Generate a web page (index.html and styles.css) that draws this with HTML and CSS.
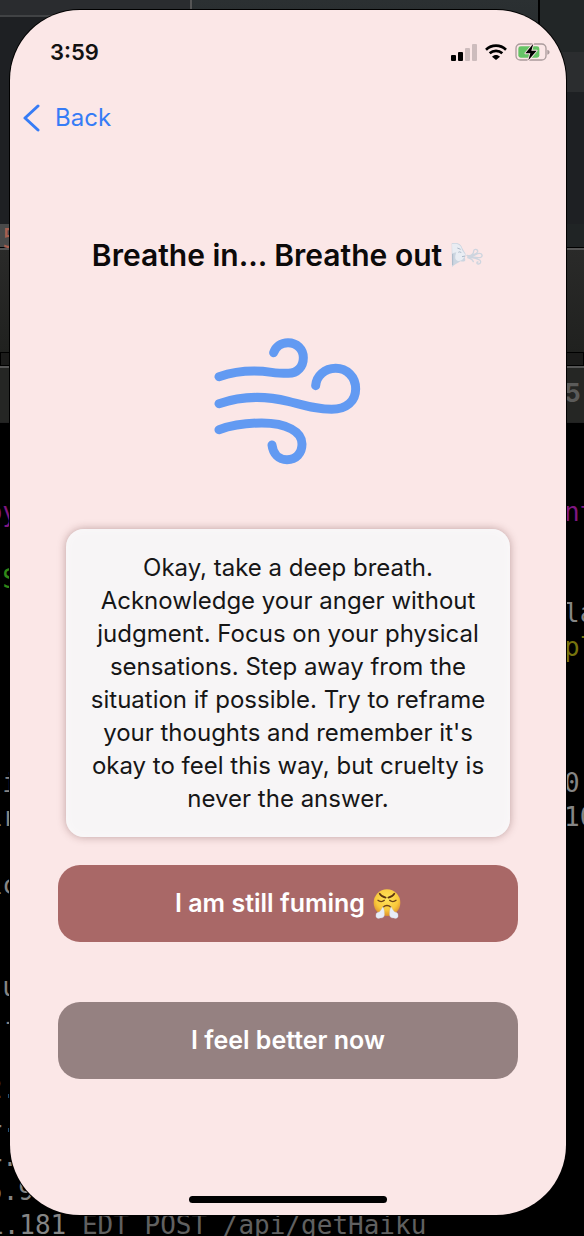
FILE: index.html
```html
<!DOCTYPE html>
<html lang="en">
<head>
<meta charset="utf-8">
<meta name="viewport" content="width=device-width, initial-scale=1">
<title>Breathe</title>
<link rel="stylesheet" href="styles.css">
</head>
<body>
<div class="desktop">
  <div class="backdrop" aria-hidden="true">
    <div class="pane pane-top"></div>
    <div class="pane pane-corner"></div>
    <div class="pane pane-strip"></div>
    <div class="pane pane-tab"></div>
    <div class="pane pane-toolbar"></div>
    <div class="pane pane-gap"></div>
    <div class="pane pane-title"></div>
    <div class="pane pane-terminal"></div>
    <span class="code code-left orange row-tab">5</span>
    <span class="code code-left purple row-1">py</span>
    <span class="code code-left green row-2">S</span>
    <span class="code code-left row-5">:i</span>
    <span class="code code-left row-6">ir</span>
    <span class="code code-left row-7">ic</span>
    <span class="code code-left row-8">u</span>
    <span class="code code-left row-9">--</span>
    <span class="code code-left row-10">2.</span>
    <span class="code code-left row-11">4.</span>
    <span class="code code-left row-12">4.</span>
    <span class="code code-edge row-13">5.9</span>
    <span class="code code-right title-digit row-title">5</span>
    <span class="code code-right purple row-1">nt</span>
    <span class="code code-right row-3">la</span>
    <span class="code code-right olive row-4">pl</span>
    <span class="code code-far row-paren">(</span>
    <span class="code code-right row-5">0.</span>
    <span class="code code-right row-6">10</span>
    <span class="code code-last row-14">1.181 <span class="dim">EDT POST /api/getHaiku</span></span>
  </div>

  <main class="phone">
    <header class="status">
      <span class="time">3:59</span>
      <span class="indicators">
        <svg class="signal" viewBox="0 0 26 17" role="img" aria-label="Signal">
          <rect x="0" y="11" width="5" height="6" rx="1"/>
          <rect x="7" y="8" width="5" height="9" rx="1"/>
          <rect class="faint" x="14" y="4" width="5" height="13" rx="1"/>
          <rect class="faint" x="21" y="0" width="5" height="17" rx="1"/>
        </svg>
        <svg class="wifi" viewBox="0 0 66 48" role="img" aria-label="Wi-Fi">
          <path class="arc" d="M3 17C20 1 46 1 63 17M14 28C25 18 41 18 52 28"/>
          <path d="M21 38C28 31 38 31 45 38L33 48Z"/>
        </svg>
        <svg class="battery" viewBox="0 0 103 54" role="img" aria-label="Battery charging">
          <rect class="shell" x="2" y="3" width="90" height="48" rx="13"/>
          <path class="shell-tip" d="M96 20C105 22 105 33 96 35Z"/>
          <rect class="charge" x="9" y="10" width="63" height="34" rx="7"/>
          <path class="bolt" d="M54 2L30 31H45L39 52L64 23H48Z"/>
        </svg>
      </span>
    </header>

    <nav class="nav">
      <a class="back" href="#">
        <svg class="chevron" viewBox="0 0 18 28" aria-hidden="true"><path d="M16 2L3 14L16 26"/></svg>
        <span>Back</span>
      </a>
    </nav>

    <section class="content">
      <h1 class="heading">
        <span>Breathe in... Breathe out</span>
        <svg class="face" viewBox="0 0 99 78" role="img" aria-label="Wind face">
          <path class="face-back" d="M2 4C18 0 31 5 34 19L44 36L41 45L43 54C42 60 36 59 28 58C22 64 10 67 3 75Z"/>
          <path class="face-front" d="M3 6C20 2 31 9 33 24L43 38C39 51 30 59 19 56C9 51 13 40 16 31L4 34Z"/>
          <path class="face-lines" d="M19 18L29 22M22 31C26 28 29 30 31 33M33 44L43 42M5 36V69"/>
          <path class="puff" d="M48 40C62 45 68 33 68 28C68 20 81 20 80 29C78 37 70 36 61 41C75 43 74 34 85 34C94 34 96 43 89 46C79 50 64 43 49 44C62 47 73 49 82 52C93 55 90 67 81 66C76 65 77 60 81 60M50 47C61 50 65 53 67 59"/>
        </svg>
      </h1>

      <svg class="wind" viewBox="-6 0 540 450" role="img" aria-label="Wind">
        <path d="M57 155C120 134 180 137 215 142C235 145 250 145 265 145C292 145 310 125 310 98C310 72 290 53 264 53C243 53 227 65 221 83"/>
        <path d="M57 236C130 211 200 213 265 229C320 243 350 253 395 253C440 253 467 228 467 192C467 155 440 130 407 130C374 130 349 153 347 182"/>
        <path d="M57 314C100 299 145 294 185 294C260 294 306 320 306 357C306 385 288 404 261 404C236 404 219 386 216 360"/>
      </svg>

      <p class="advice">Okay, take a deep breath. Acknowledge your anger without judgment. Focus on your physical sensations. Step away from the situation if possible. Try to reframe your thoughts and remember it's okay to feel this way, but cruelty is never the answer.</p>

      <div class="actions">
        <button class="action action-fuming" type="button">
          <span>I am still fuming</span>
          <svg class="steam" viewBox="0 0 84 90" role="img" aria-label="Face with steam from nose">
            <defs>
              <radialGradient id="skin" cx="50%" cy="35%" r="65%">
                <stop offset="0" stop-color="#ffe45c"/>
                <stop offset="0.65" stop-color="#f9c93c"/>
                <stop offset="1" stop-color="#dd8f2b"/>
              </radialGradient>
            </defs>
            <circle cx="42" cy="41" r="40" fill="url(#skin)"/>
            <path class="brow" d="M20 14C24 22 30 24 38 26M64 14C60 22 54 24 46 26"/>
            <path class="lid" d="M15 34C20 39 29 39 34 34M50 34C55 39 64 39 69 34M31 54C37 48 47 48 53 54"/>
            <path class="vapor" d="M30 53C33 60 34 65 34 73C36 83 29 88 22 87C15 91 7 86 9 79C8 72 14 69 19 69C23 65 26 59 30 53Z"/>
            <path class="vapor" d="M54 53C51 60 50 65 50 73C48 83 55 88 62 87C69 91 77 86 75 79C76 72 70 69 65 69C61 65 58 59 54 53Z"/>
          </svg>
        </button>
        <button class="action action-better" type="button">I feel better now</button>
      </div>
    </section>

    <div class="home-bar"></div>
  </main>
</div>
</body>
</html>
```

FILE: styles.css
```css
* { box-sizing: border-box; }

body {
  margin: 0;
  background: #000;
  font-family: Inter, "Liberation Sans", sans-serif;
}

.desktop {
  position: relative;
  min-height: 100vh;
  padding: 10px 18px 21px 10px;
  overflow: hidden;
}

/* Windows lying behind the phone */
.backdrop { position: absolute; inset: 0; overflow: hidden; background: #1e2023; }
.pane { position: absolute; left: 0; right: 0; }
.pane-top { top: 0; height: 17px; right: 394px; background: #2a2c2f; border-bottom: 2px solid #414345; }
.pane-corner { top: 0; height: 92px; left: 190px; background: linear-gradient(#2b3032, #222627); border-left: 2px solid #555; }
.pane-strip { top: 0; height: 92px; left: 538px; background: linear-gradient(#222627 52px, #2b2d2f 52px); border-left: 2px solid #000; }
.pane-tab { top: 224px; height: 24px; background: linear-gradient(90deg, #4a4a4a 50%, #202425 50%); }
.pane-toolbar { top: 247px; height: 106px; background: linear-gradient(#2a2a29, #20211f); border-top: 1px solid #000; box-shadow: inset 0 2px #555; }
.pane-gap { top: 352px; height: 14px; background: #1b1b1a; border: 1px solid #000; }
.pane-title { top: 366px; height: 56px; background: #252624; border-top: 2px solid #555; }
.pane-terminal { top: 422px; bottom: 0; background: #000; border-top: 1px solid #222; }

.code {
  position: absolute;
  color: #858585;
  font-family: "DejaVu Sans Mono", monospace;
  font-size: 26px;
  line-height: 28px;
  white-space: pre;
}
.code-left { right: calc(100% - 18px); }
.code-edge { right: calc(100% - 34px); }
.code-right { left: calc(100% - 20px); }
.code-far { left: calc(100% - 5px); }
.code-last { left: -12px; }
.purple { color: #7f1781; }
.green { color: #318818; }
.olive { color: #77740e; }
.orange { color: #a65f50; }
.dim { color: #606060; }
.title-digit { color: #5b5b5a; font-family: Inter, sans-serif; font-weight: 700; }
.row-tab { top: 225px; }
.row-title { top: 379px; }
.row-1 { top: 498px; }
.row-2 { top: 565px; }
.row-3 { top: 599px; }
.row-4 { top: 633px; }
.row-paren { top: 700px; }
.row-5 { top: 769px; }
.row-6 { top: 803px; }
.row-7 { top: 871px; }
.row-8 { top: 973px; }
.row-9 { top: 1007px; }
.row-10 { top: 1075px; }
.row-11 { top: 1109px; }
.row-12 { top: 1143px; }
.row-13 { top: 1177px; }
.row-14 { top: 1211px; }

.phone {
  position: relative;
  display: flex;
  flex-direction: column;
  min-height: calc(100vh - 31px);
  background: #fbe7e7;
  border-radius: 70px;
  box-shadow: 0 0 0 1px #000;
}

.status {
  display: flex;
  align-items: center;
  justify-content: space-between;
  padding: 26px 16px 0 40px;
}
.time { font-size: 22px; line-height: 32px; font-weight: 600; color: #111; }
.indicators { display: flex; align-items: center; gap: 8px; }
.signal { width: 26px; height: 17px; }
.faint { fill: #cdbcbd; }
.wifi { width: 22px; height: 16px; }
.arc { fill: none; stroke: #000; stroke-width: 8; }
.battery { width: 35px; height: 18px; }
.shell { fill: none; stroke: #aa9b9c; stroke-width: 4; }
.shell-tip { fill: #aa9b9c; }
.charge { fill: #65c466; }
.bolt { fill: #000; stroke: #fbe7e7; stroke-width: 5; paint-order: stroke; stroke-linejoin: round; }

.nav { padding: 34px 12px 0; }
.back {
  display: inline-flex;
  align-items: center;
  gap: 15px;
  color: #367cf6;
  font-size: 24px;
  line-height: 32px;
  text-decoration: none;
}
.chevron { width: 18px; height: 28px; fill: none; stroke: currentColor; stroke-width: 3; stroke-linecap: round; stroke-linejoin: round; }

.content {
  display: flex;
  flex-direction: column;
  align-items: center;
  padding: 99px 48px 0;
}
.heading {
  display: flex;
  align-items: center;
  gap: 9px;
  margin: 0;
  color: #0c0a0a;
  font-size: 30px;
  line-height: 40px;
  font-weight: 600;
  white-space: nowrap;
}
.face { width: 33px; height: 26px; }
.face-back { fill: #cbd5e0; }
.face-front { fill: #e9edf3; }
.face-lines { fill: none; stroke: #aab8c8; stroke-width: 3; }
.puff { fill: none; stroke: #ced5df; stroke-width: 4; stroke-linecap: round; }

.wind {
  width: 180px;
  height: 150px;
  margin-top: 50px;
  fill: none;
  stroke: #629af2;
  stroke-width: 27;
  stroke-linecap: round;
}

.advice {
  width: calc(100% - 16px);
  margin: 54px 0 0;
  padding: 22px;
  border-radius: 18px;
  background: #f7f5f6;
  box-shadow: 0 0 9px rgba(80, 30, 30, 0.35), inset 0 0 8px #fbf9fa;
  color: #161616;
  font-size: 24px;
  line-height: 33px;
  text-align: center;
}

.actions { display: flex; flex-direction: column; gap: 60px; width: 100%; margin-top: 28px; }
.action {
  display: flex;
  align-items: center;
  justify-content: center;
  gap: 8px;
  width: 100%;
  padding: 22px 16px;
  border: 0;
  border-radius: 22px;
  color: #fff;
  font-family: inherit;
  font-size: 25px;
  line-height: 33px;
  font-weight: 600;
  cursor: pointer;
}
.action-fuming { background: #a96867; }
.action-better { background: #958181; }
.steam { width: 28px; height: 30px; }
.brow { fill: none; stroke: #5b3311; stroke-width: 5; stroke-linecap: round; }
.lid { fill: none; stroke: #6d4317; stroke-width: 4; stroke-linecap: round; }
.vapor { fill: #e8edf7; stroke: #c6cfdf; stroke-width: 1; }

.home-bar {
  width: 198px;
  height: 7px;
  margin: auto auto 12px;
  border-radius: 4px;
  background: #000;
}
```
